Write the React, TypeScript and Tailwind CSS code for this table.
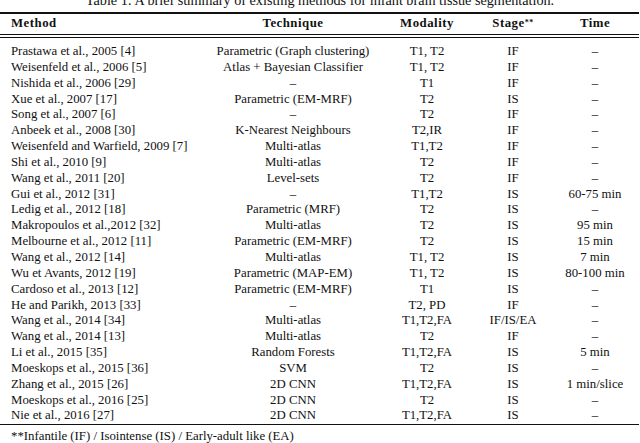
import React from "react";

const rows: [string, string, string, string, string][] = [
  ["Prastawa et al., 2005 [4]", "Parametric (Graph clustering)", "T1, T2", "IF", "–"],
  ["Weisenfeld et al., 2006 [5]", "Atlas + Bayesian Classifier", "T1, T2", "IF", "–"],
  ["Nishida et al., 2006 [29]", "–", "T1", "IF", "–"],
  ["Xue et al., 2007 [17]", "Parametric (EM-MRF)", "T2", "IS", "–"],
  ["Song et al., 2007 [6]", "–", "T2", "IF", "–"],
  ["Anbeek et al., 2008 [30]", "K-Nearest Neighbours", "T2,IR", "IF", "–"],
  ["Weisenfeld and Warfield, 2009 [7]", "Multi-atlas", "T1,T2", "IF", "–"],
  ["Shi et al., 2010 [9]", "Multi-atlas", "T2", "IF", "–"],
  ["Wang et al., 2011 [20]", "Level-sets", "T2", "IF", "–"],
  ["Gui et al., 2012 [31]", "–", "T1,T2", "IS", "60-75 min"],
  ["Ledig et al., 2012 [18]", "Parametric (MRF)", "T2", "IS", "–"],
  ["Makropoulos et al.,2012 [32]", "Multi-atlas", "T2", "IS", "95 min"],
  ["Melbourne et al., 2012 [11]", "Parametric (EM-MRF)", "T2", "IS", "15 min"],
  ["Wang et al., 2012 [14]", "Multi-atlas", "T1, T2", "IS", "7 min"],
  ["Wu et Avants, 2012 [19]", "Parametric (MAP-EM)", "T1, T2", "IS", "80-100 min"],
  ["Cardoso et al., 2013 [12]", "Parametric (EM-MRF)", "T1", "IS", "–"],
  ["He and Parikh, 2013 [33]", "–", "T2, PD", "IF", "–"],
  ["Wang et al., 2014 [34]", "Multi-atlas", "T1,T2,FA", "IF/IS/EA", "–"],
  ["Wang et al., 2014 [13]", "Multi-atlas", "T2", "IF", "–"],
  ["Li et al., 2015 [35]", "Random Forests", "T1,T2,FA", "IS", "5 min"],
  ["Moeskops et al., 2015 [36]", "SVM", "T2", "IS", "–"],
  ["Zhang et al., 2015 [26]", "2D CNN", "T1,T2,FA", "IS", "1 min/slice"],
  ["Moeskops et al., 2016 [25]", "2D CNN", "T2", "IS", "–"],
  ["Nie et al., 2016 [27]", "2D CNN", "T1,T2,FA", "IS", "–"],
];

function Cell({ children, left }: { children: React.ReactNode; left?: boolean }) {
  return (
    <div
      className={
        left
          ? "flex items-center whitespace-nowrap pl-[11px]"
          : "flex items-center justify-center whitespace-nowrap"
      }
    >
      {children}
    </div>
  );
}

export default function App() {
  return (
    <div className="w-[640px] h-[443px] overflow-hidden bg-white text-[#111] flex flex-col font-['Liberation_Serif','Times_New_Roman',serif]">
      <div className="mt-[-8px] h-[16px] leading-[16px] text-center text-[14.2px] whitespace-nowrap">
        Table 1: A brief summary of existing methods for infant brain tissue segmentation.
      </div>
      <div className="w-[639px] flex flex-col">
        <div className="h-[4px]" />
        <div className="h-[1.5px] bg-[#111]" />
        <div className="h-[20px] grid grid-cols-[200px_186px_82px_90px_74px] text-[12.8px] font-bold tracking-[0.5px]">
          <Cell left>Method</Cell>
          <Cell>Technique</Cell>
          <Cell>Modality</Cell>
          <Cell>
            Stage<sup className="text-[8px] font-bold relative top-[-1px]">**</sup>
          </Cell>
          <Cell>Time</Cell>
        </div>
        <div className="h-px bg-[#111]" />
        <div className="h-[2.5px]" />
        <div className="h-px bg-[#111]" />
        <div className="h-[4px]" />
        <div className="flex flex-col text-[12.8px]">
          {rows.map((r, i) => (
            <div key={i} className="h-[15.85px] grid grid-cols-[200px_186px_82px_90px_74px]">
              <Cell left>{r[0]}</Cell>
              <Cell>{r[1]}</Cell>
              <Cell>{r[2]}</Cell>
              <Cell>{r[3]}</Cell>
              <Cell>{r[4]}</Cell>
            </div>
          ))}
        </div>
        <div className="h-[1.5px]" />
        <div className="h-[1.5px] bg-[#111]" />
        <div className="mt-[2.5px] h-[16px] leading-[16px] pl-[11px] text-[12.8px] whitespace-nowrap">
          **Infantile (IF) / Isointense (IS) / Early-adult like (EA)
        </div>
      </div>
    </div>
  );
}
